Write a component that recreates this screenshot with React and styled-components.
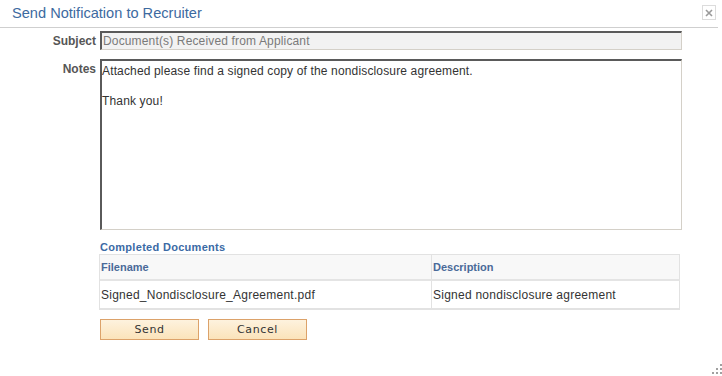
import React from "react";
import styled, { createGlobalStyle } from "styled-components";

const Global = createGlobalStyle`
  html, body { margin: 0; padding: 0; background: #fff; }
  body { font-family: "Liberation Sans", Arial, sans-serif; }
  * { box-sizing: border-box; }
`;

const Dialog = styled.div`
  width: 722px;
  height: 376px;
  position: relative;
  background: #fff;
`;

const Header = styled.div`
  height: 28px;
  display: flex;
  align-items: flex-start;
  justify-content: space-between;
  border-bottom: 1px solid #cfcfcf;
  margin-right: 4px;
  padding: 4px 0 0 12px;
`;

const Title = styled.h1`
  margin: 0;
  font-size: 14.6px;
  font-weight: normal;
  color: #3d6aa0;
  line-height: 18px;
`;

const Close = styled.button`
  width: 14px;
  height: 15px;
  margin: 1px 2px 0 0;
  padding: 0;
  border: 1px solid #dcdcdc;
  background: #fff;
  display: flex;
  align-items: center;
  justify-content: center;
`;

const Body = styled.div`
  padding-top: 3px;
  display: flex;
  flex-direction: column;
`;

const FieldRow = styled.div`
  display: flex;
  align-items: flex-start;
  margin-bottom: ${(p) => p.$gap || 0}px;
`;

const Label = styled.label`
  width: 100px;
  padding-right: 4px;
  text-align: right;
  font-size: 12px;
  font-weight: bold;
  color: #565656;
  line-height: 14px;
  padding-top: ${(p) => p.$top || 2}px;
`;

const SubjectInput = styled.div`
  width: 582px;
  height: 19px;
  background: #f2f2f2;
  border-style: solid;
  border-width: 2px 1px 1px 2px;
  border-color: #5a5a5a #d4d0c8 #d4d0c8 #5a5a5a;
  font-size: 12px;
  letter-spacing: 0.15px;
  color: #7a7a7a;
  padding: 1px 1px;
  line-height: 14px;
`;

const NotesArea = styled.div`
  width: 582px;
  height: 171px;
  background: #fff;
  border-style: solid;
  border-width: 2px 1px 1px 2px;
  border-color: #5a5a5a #d4d0c8 #d4d0c8 #5a5a5a;
  font-size: 12px;
  letter-spacing: 0.15px;
  color: #333;
  padding: 3px 0;
  line-height: 15px;
`;

const Para = styled.p`
  margin: 0 0 ${(p) => p.$after || 0}px 0;
`;

const Section = styled.div`
  margin-left: 99px;
  width: 581px;
  margin-top: 11px;
`;

const SectionTitle = styled.div`
  font-size: 11px;
  font-weight: bold;
  letter-spacing: 0.3px;
  color: #3b6aa5;
  line-height: 13px;
  padding-left: 1px;
`;

const Table = styled.div`
  display: grid;
  grid-template-columns: 332px 1fr;
  border: 1px solid #e2e2e2;
  border-right: 0;
`;

const HeadCell = styled.div`
  height: 26px;
  background: #f8f8f8;
  border-right: 1px solid #e2e2e2;
  border-bottom: 2px solid #e4e4e4;
  font-size: 11px;
  font-weight: bold;
  color: #4a6a99;
  display: flex;
  align-items: center;
  padding-left: 1px;
`;

const Cell = styled.div`
  height: 28px;
  border-right: 1px solid #e2e2e2;
  border-bottom: 1px solid #e2e2e2;
  font-size: 12px;
  letter-spacing: 0.25px;
  color: #333;
  display: flex;
  align-items: center;
  padding-left: 1px;
`;

const Buttons = styled.div`
  display: flex;
  gap: 9px;
  margin: 9px 0 0 100px;
`;

const Button = styled.button`
  width: 99px;
  height: 21px;
  border: 1px solid #dca26a;
  background: linear-gradient(#fdf2de, #fbe3ba);
  font-family: "DejaVu Sans", "Liberation Sans", sans-serif;
  font-size: 11px;
  color: #333;
  letter-spacing: 0.6px;
  padding: 0;
`;

const Grip = styled.div`
  position: absolute;
  right: 0;
  bottom: 2px;
  width: 10px;
  height: 10px;
  line-height: 0;
`;

export default function App() {
  return (
    <>
      <Global />
      <Dialog>
        <Header>
          <Title>Send Notification to Recruiter</Title>
          <Close aria-label="Close">
            <svg width="8" height="8" viewBox="0 0 8 8">
              <path d="M1 1L7 7M7 1L1 7" stroke="#9a9a9a" strokeWidth="1.6" />
            </svg>
          </Close>
        </Header>
        <Body>
          <FieldRow $gap={9}>
            <Label $top={3}>Subject</Label>
            <SubjectInput>Document(s) Received from Applicant</SubjectInput>
          </FieldRow>
          <FieldRow>
            <Label $top={3}>Notes</Label>
            <NotesArea>
              <Para $after={15}>Attached please find a signed copy of the nondisclosure agreement.</Para>
              <Para>Thank you!</Para>
            </NotesArea>
          </FieldRow>
          <Section>
            <SectionTitle>Completed Documents</SectionTitle>
            <Table>
              <HeadCell>Filename</HeadCell>
              <HeadCell>Description</HeadCell>
              <Cell>Signed_Nondisclosure_Agreement.pdf</Cell>
              <Cell>Signed nondisclosure agreement</Cell>
            </Table>
          </Section>
          <Buttons>
            <Button>Send</Button>
            <Button>Cancel</Button>
          </Buttons>
        </Body>
        <Grip>
          <svg width="10" height="10" viewBox="0 0 10 10">
            <g fill="#a0a0a0">
              <rect x="8" y="0" width="2" height="2" />
              <rect x="4" y="4" width="2" height="2" />
              <rect x="8" y="4" width="2" height="2" />
              <rect x="0" y="8" width="2" height="2" />
              <rect x="4" y="8" width="2" height="2" />
              <rect x="8" y="8" width="2" height="2" />
            </g>
          </svg>
        </Grip>
      </Dialog>
    </>
  );
}
